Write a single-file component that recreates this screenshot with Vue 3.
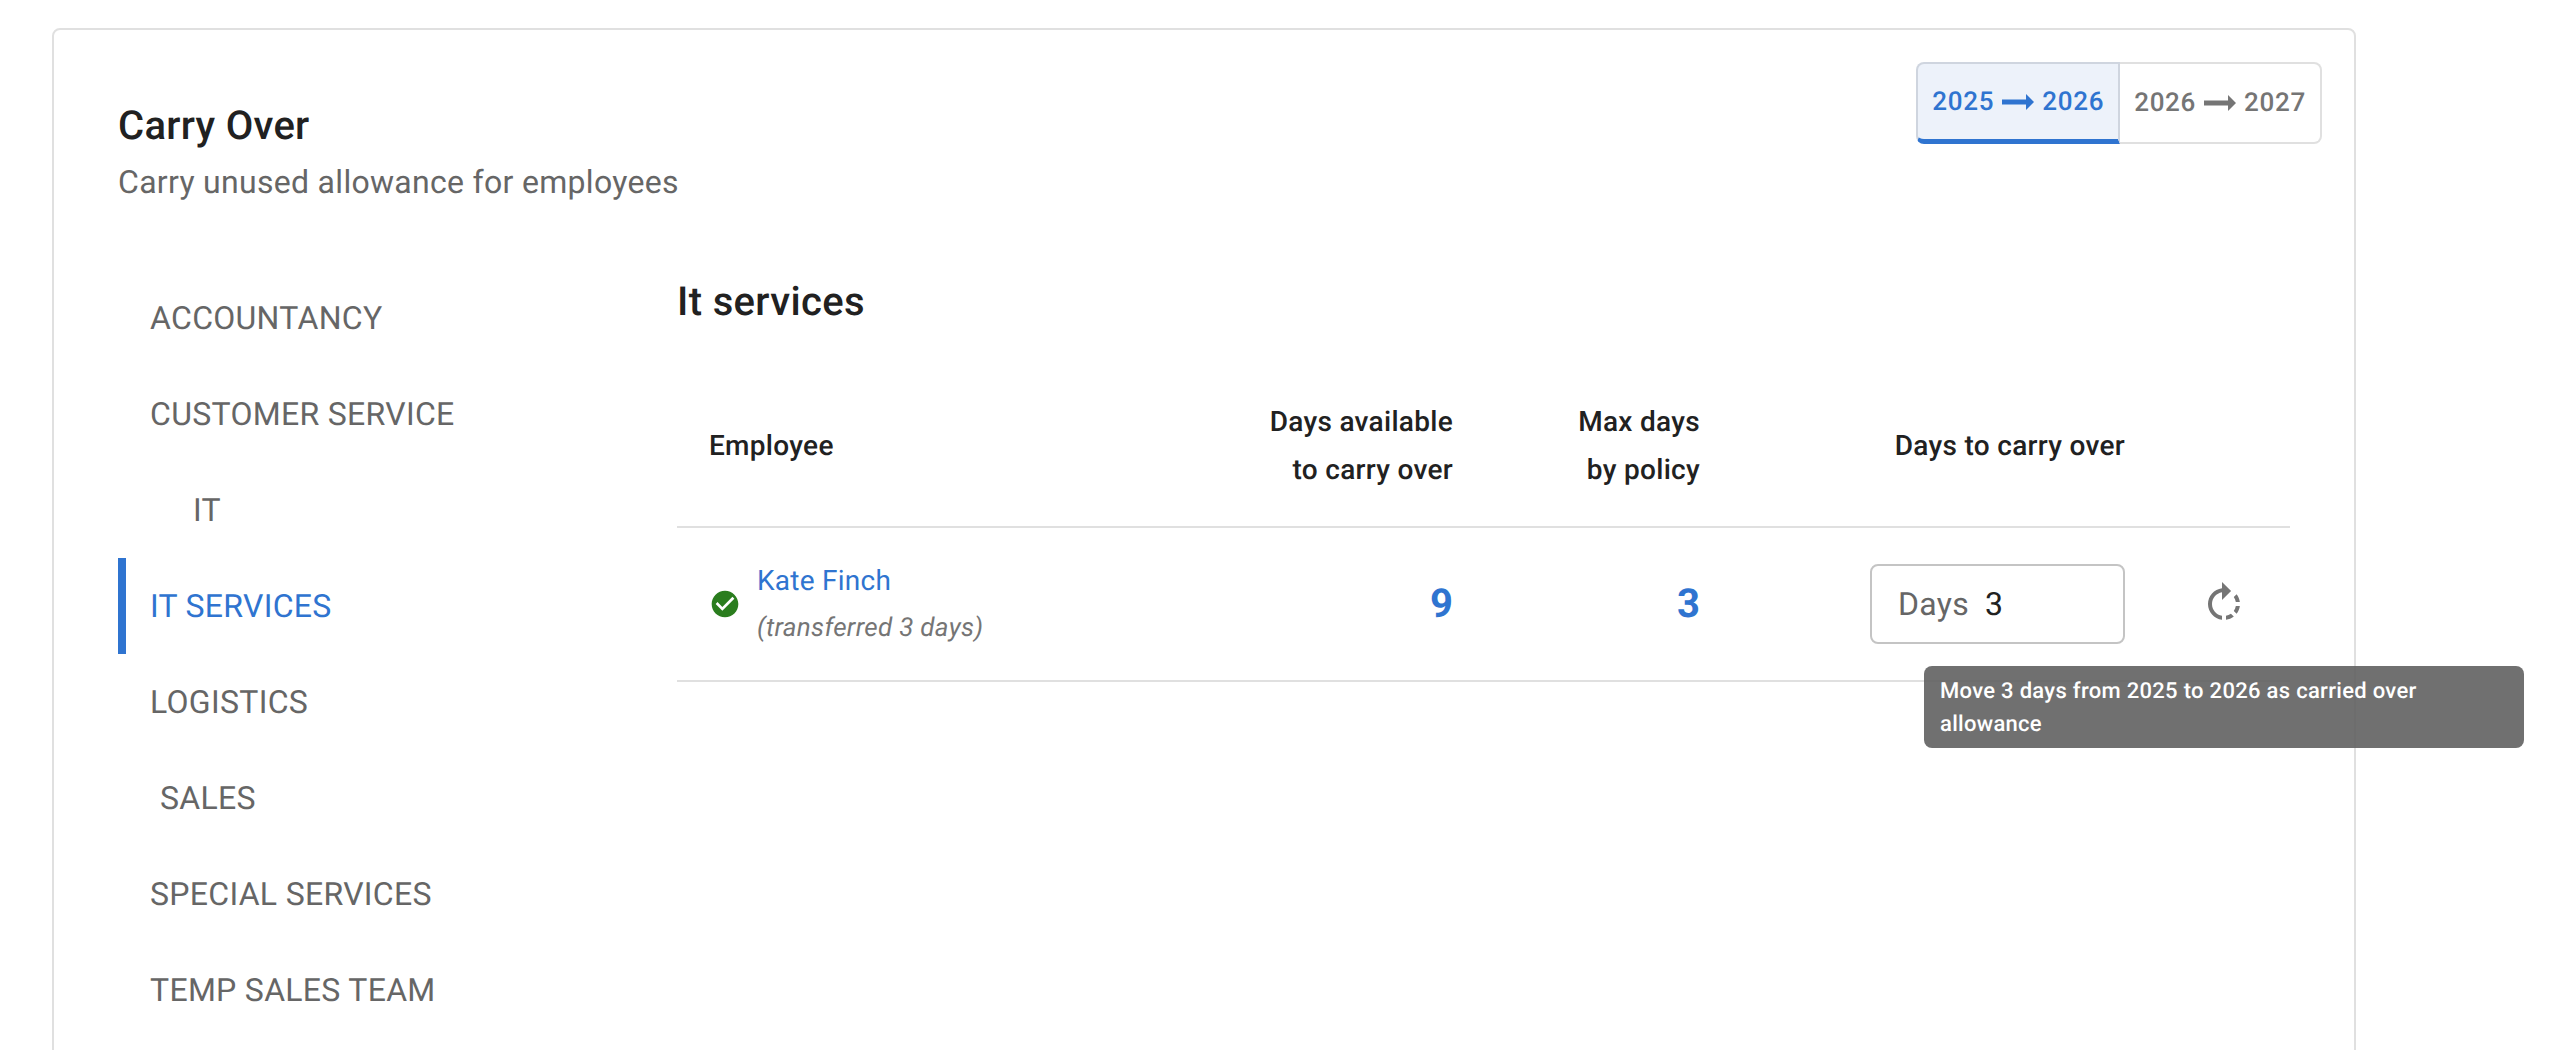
<script setup>
const departments = [
  { name: 'ACCOUNTANCY' },
  { name: 'CUSTOMER SERVICE' },
  { name: 'IT', indent: 'wide' },
  { name: 'IT SERVICES', active: true },
  { name: 'LOGISTICS' },
  { name: 'SALES', indent: 'narrow' },
  { name: 'SPECIAL SERVICES' },
  { name: 'TEMP SALES TEAM' }
]
const years = [
  { from: 2025, to: 2026, active: true },
  { from: 2026, to: 2027 }
]
</script>

<template>
  <div class="page">
    <section class="card">
      <header class="head">
        <div class="titles">
          <h1 class="title">Carry Over</h1>
          <p class="subtitle">Carry unused allowance for employees</p>
        </div>
        <div class="toggle">
          <button v-for="y in years" :key="y.from" class="year" :class="{ on: y.active }">
            <span>{{ y.from }}</span>
            <svg class="arrow" viewBox="0 0 24 24"><path d="M16.01 10.75H4v2.5h12.01V16L20 12l-3.99-4z" /></svg>
            <span>{{ y.to }}</span>
          </button>
        </div>
      </header>
      <div class="body">
        <nav class="side">
          <a v-for="d in departments" :key="d.name" class="dept" :class="[d.indent, { on: d.active }]">{{ d.name }}</a>
        </nav>
        <main class="content">
          <h2 class="section">It services</h2>
          <div class="grid headrow">
            <div class="hcell first">Employee</div>
            <div class="hcell right">Days available<br />to carry over</div>
            <div class="hcell right">Max days<br />by policy</div>
            <div class="hcell right">Days to carry over</div>
            <div></div>
          </div>
          <div class="grid row">
            <div class="person">
              <svg class="check" viewBox="0 0 24 24"><path d="M12 2C6.48 2 2 6.48 2 12s4.48 10 10 10 10-4.48 10-10S17.52 2 12 2zm-2 15l-5-5 1.41-1.41L10 14.17l7.59-7.59L19 8l-9 9z" /></svg>
              <div class="who">
                <a class="name">Kate Finch</a>
                <em class="note">(transferred 3 days)</em>
              </div>
            </div>
            <div class="num">9</div>
            <div class="num">3</div>
            <div class="field-cell">
              <label class="field"><span class="prefix">Days</span><span class="val">3</span></label>
            </div>
            <div class="action">
              <svg class="rotate" viewBox="0 0 24 24"><path d="M15.55 5.55L11 1v3.07C7.06 4.56 4 7.92 4 12s3.05 7.44 7 7.93v-2.02c-2.84-.48-5-2.94-5-5.91s2.16-5.43 5-5.91V10l4.55-4.45zM19.93 11c-.17-1.39-.72-2.73-1.62-3.89l-1.42 1.42c.54.75.88 1.6 1.02 2.47h2.02zM13 17.9v2.02c1.39-.17 2.74-.71 3.9-1.61l-1.44-1.44c-.75.54-1.59.89-2.46 1.03zm3.89-2.42l1.42 1.41c.9-1.16 1.45-2.5 1.62-3.89h-2.02c-.14.87-.48 1.72-1.02 2.48z" /></svg>
            </div>
            <div class="tip">Move 3 days from 2025 to 2026 as carried over allowance</div>
          </div>
        </main>
      </div>
    </section>
  </div>
</template>

<style>
html, body { margin: 0; background: #fff; }
</style>

<style scoped>
.page {
  height: 1050px;
  overflow: hidden;
  padding: 28px 0 0 52px;
  box-sizing: border-box;
  font-family: Roboto, "Noto Sans", sans-serif;
  color: #212121;
  text-rendering: geometricPrecision;
}
.card {
  width: 2304px;
  min-height: 1100px;
  box-sizing: border-box;
  border: 2px solid #e0e0e0;
  border-radius: 8px;
  padding: 32px 64px 0;
}
.head { display: flex; justify-content: space-between; align-items: flex-start; }
.titles { padding-top: 40px; }
.title { margin: 0 0 8px; font-size: 40px; line-height: 48px; font-weight: 500; letter-spacing: .3px; }
.subtitle { margin: 0 0 -1px; font-size: 32px; line-height: 48px; color: #666; letter-spacing: .3px; }
.toggle { display: flex; margin-right: -32px; height: 82px; }
.year {
  display: flex;
  align-items: center;
  padding: 0 14px;
  background: #fff;
  border: 2px solid #e0e0e0;
  font: 500 26px Roboto, sans-serif;
  letter-spacing: .7px;
  text-rendering: geometricPrecision;
  color: #757575;
  fill: #757575;
}
.year:first-child { border-radius: 8px 0 0 8px; border-right: 0; }
.year:last-child { border-radius: 0 8px 8px 0; border-left: 0; }
.year.on {
  background: #edf2fa;
  color: #2f74d0;
  fill: #2f74d0;
  border-color: #cfd5df;
  border-right: 2px solid #cfd5df;
  border-bottom: 5px solid #2f74d0;
}
.arrow { width: 48px; height: 48px; }
.body { display: flex; margin-top: 65px; }
.side { width: 559px; flex: none; display: flex; flex-direction: column; }
.dept {
  height: 96px;
  line-height: 96px;
  padding-left: 32px;
  font-size: 32px;
  letter-spacing: .3px;
  color: #666;
}
.dept.wide { padding-left: 75px; }
.dept.narrow { padding-left: 42px; }
.dept.on { border-left: 8px solid #2f74d0; padding-left: 24px; color: #2f74d0; }
.content { flex: 1; padding-top: 8px; }
.section { margin: 0 0 37px; font-size: 40px; line-height: 48px; font-weight: 500; letter-spacing: .35px; }
.grid { display: grid; grid-template-columns: 456px 320px 247px 425px 165px; }
.headrow { height: 165px; padding-top: 2px; box-sizing: border-box; border-bottom: 2px solid #e0e0e0; align-items: center; }
.hcell { font-size: 28px; line-height: 48px; font-weight: 500; letter-spacing: .3px; }
.hcell.first { padding-left: 32px; }
.right { text-align: right; }
.row { position: relative; height: 154px; box-sizing: border-box; border-bottom: 2px solid #e0e0e0; align-items: center; }
.person { display: flex; align-items: center; padding-left: 32px; }
.check { width: 32px; height: 32px; fill: #2a7d1e; margin-right: 16px; }
.who { display: flex; flex-direction: column; }
.name { font-size: 28px; line-height: 46px; color: #2f74d0; letter-spacing: .25px; margin-bottom: 2px; }
.note { font-size: 26px; line-height: 45px; color: #757575; letter-spacing: .3px; }
.num { text-align: right; font-size: 40px; font-weight: 700; color: #2f74d0; padding-bottom: 2px; }
.field-cell { display: flex; justify-content: flex-end; }
.field {
  width: 255px;
  height: 80px;
  box-sizing: border-box;
  border: 2px solid #c4c4c4;
  border-radius: 8px;
  display: flex;
  align-items: center;
  padding-left: 26px;
  font-size: 32px;
  letter-spacing: .3px;
}
.prefix { color: #666; width: 87px; }
.val { color: #212121; }
.action { padding-left: 75px; display: flex; }
.rotate { width: 48px; height: 48px; fill: #757575; }
.tip {
  position: absolute;
  left: 1247px;
  top: 138px;
  width: 600px;
  box-sizing: border-box;
  padding: 9px 16px 7px;
  border-radius: 8px;
  background: rgba(97, 97, 97, .9);
  color: #fff;
  font-size: 22px;
  line-height: 33px;
  font-weight: 500;
  letter-spacing: .3px;
}
</style>
